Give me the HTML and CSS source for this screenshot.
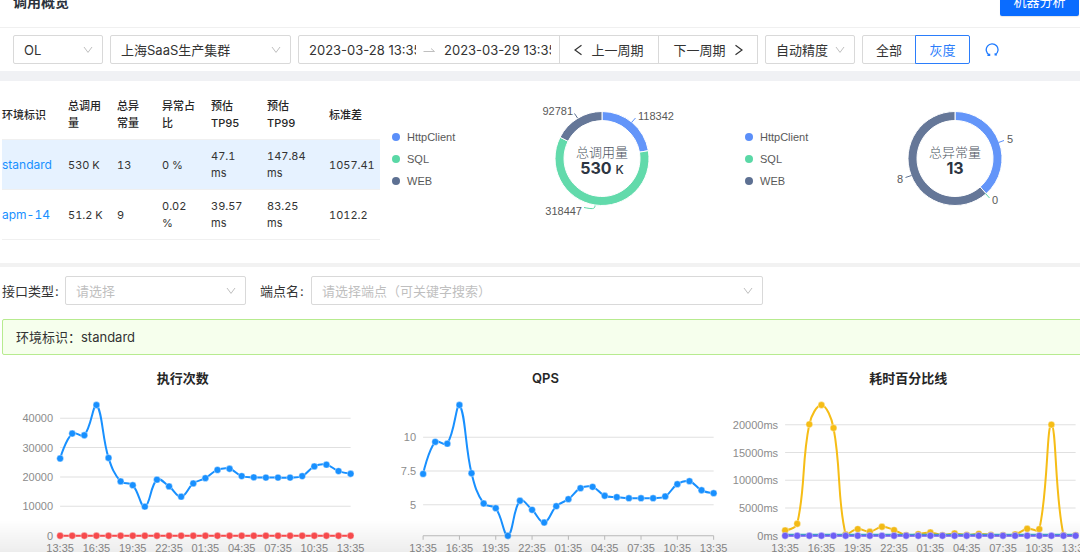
FILE: index.html
```html
<!DOCTYPE html>
<html lang="zh-CN">
<head>
<meta charset="utf-8">
<title>调用概览</title>
<link rel="stylesheet" href="styles.css">
</head>
<body>
<main class="page">
  <header class="header">
    <h1 class="title">调用概览</h1>
    <button class="primary" type="button">机器分析</button>
  </header>

  <div class="toolbar">
    <span class="select select-s">
      <select aria-label="环境"><option>OL</option></select>
      <svg class="chev" viewBox="0 0 10 8"><path d="M1 1l4 5.4L9 1"/></svg>
    </span>
    <span class="select select-m">
      <select aria-label="集群"><option>上海SaaS生产集群</option></select>
      <svg class="chev" viewBox="0 0 10 8"><path d="M1 1l4 5.4L9 1"/></svg>
    </span>
    <div class="group">
      <div class="range">
        <input aria-label="开始时间" value="2023-03-28 13:35:00">
        <svg class="swap" viewBox="0 0 12 6"><path d="M0.5 4.5h11L8 1.5"/></svg>
        <input aria-label="结束时间" value="2023-03-29 13:35:00">
      </div>
      <button class="btn period" type="button"><svg class="arrow" viewBox="0 0 8 12"><path d="M7.5 1.2L1 6l6.500 4.800"/></svg>上一周期</button>
      <button class="btn period" type="button">下一周期<svg class="arrow" viewBox="0 0 8 12"><path d="M0.500 1.200L7 6 0.500 10.800"/></svg></button>
    </div>
    <span class="select select-s">
      <select aria-label="精度"><option>自动精度</option></select>
      <svg class="chev" viewBox="0 0 10 8"><path d="M1 1l4 5.4L9 1"/></svg>
    </span>
    <div class="group">
      <button class="btn mode" type="button">全部</button>
      <button class="btn mode active" type="button">灰度</button>
    </div>
    <button class="reload" type="button" aria-label="刷新">
      <svg viewBox="0 0 14 14"><path d="M4.300 11.900A5.900 5.900 0 1 1 10.300 11.700"/><path d="M2.400 12.300h2.200v-1.600M12 11.900h-1.800v-1.600"/></svg>
    </button>
  </div>

  <section class="overview">
    <table class="stats">
      <colgroup><col class="c1"><col class="c2"><col class="c3"><col class="c4"><col class="c5"><col class="c6"><col class="c7"></colgroup>
      <thead>
        <tr><th>环境标识</th><th>总调用量</th><th>总异常量</th><th>异常占比</th><th>预估 TP95</th><th>预估 TP99</th><th>标准差</th></tr>
      </thead>
      <tbody>
        <tr class="current"><td><a href="#">standard</a></td><td>530 K</td><td>13</td><td>0 %</td><td class="time">47.1 ms</td><td class="time">147.84 ms</td><td>1057.41</td></tr>
        <tr><td><a href="#">apm-14</a></td><td>51.2 K</td><td>9</td><td>0.02 %</td><td class="time">39.57 ms</td><td class="time">83.25 ms</td><td>1012.2</td></tr>
      </tbody>
    </table>

    <div class="pie">
      <ul class="legend"><li class="http">HttpClient</li><li class="sql">SQL</li><li class="web">WEB</li></ul>
      <svg class="donut" viewBox="0 0 180 126" data-values="118342,318447,92781">
        <g class="ring"></g>
        <path class="lead blue" d="M119.500 26.500l4-4.500"/>
        <path class="lead navy" d="M65.500 22l-3-4.500"/>
        <path class="lead green" d="M83 109.500c0 4-3 3.500-11 2"/>
        <text class="tag" x="126" y="24">118342</text>
        <text class="tag end" x="61" y="19">92781</text>
        <text class="tag end" x="70" y="119">318447</text>
        <text class="name" x="90" y="61">总调用量</text>
        <text class="total" x="90" y="78">530 <tspan class="unit">K</tspan></text>
      </svg>
    </div>

    <div class="pie">
      <ul class="legend"><li class="http">HttpClient</li><li class="sql">SQL</li><li class="web">WEB</li></ul>
      <svg class="donut" viewBox="0 0 180 126" data-values="5,0,8">
        <g class="ring"></g>
        <path class="lead blue" d="M133.500 46.500l5.500-2"/>
        <path class="lead navy" d="M46.500 79.500l-6 2"/>
        <path class="lead green" d="M120.500 97.500l4 4.500"/>
        <text class="tag" x="142" y="47">5</text>
        <text class="tag" x="127" y="108">0</text>
        <text class="tag end" x="38" y="87">8</text>
        <text class="name" x="90" y="61">总异常量</text>
        <text class="total" x="90" y="78">13</text>
      </svg>
    </div>
  </section>

  <div class="filters">
    <label for="kind">接口类型<span class="colon">:</span></label>
    <span class="select select-m hint">
      <select id="kind"><option>请选择</option></select>
      <svg class="chev" viewBox="0 0 10 8"><path d="M1 1l4 5.4L9 1"/></svg>
    </span>
    <label class="second" for="endpoint">端点名<span class="colon">:</span></label>
    <span class="select select-l hint">
      <select id="endpoint"><option>请选择端点（可关键字搜索）</option></select>
      <svg class="chev" viewBox="0 0 10 8"><path d="M1 1l4 5.4L9 1"/></svg>
    </span>
  </div>

  <div class="banner">环境标识：standard</div>

  <section class="charts">
    <article><h2>执行次数</h2><svg class="plot" id="count" viewBox="0 0 362 170"></svg></article>
    <article><h2>QPS</h2><svg class="plot" id="qps" viewBox="0 0 362 170"></svg></article>
    <article><h2>耗时百分比线</h2><svg class="plot" id="latency" viewBox="0 0 362 170"></svg></article>
  </section>
</main>
<div class="fade"></div>
<script src="charts.js"></script>
</body>
</html>
```
FILE: styles.css
```css
* { box-sizing: border-box; }

body {
  margin: 0;
  height: 100vh;
  overflow: hidden;
  background: #fff;
  color: #333;
  font: 13px/20px Inter, "Noto Sans CJK SC", sans-serif;
}

button, input, select { font: inherit; color: inherit; }
button { cursor: pointer; }

/* the content is wider than the window, which cuts its right edge */
.page { width: calc(100% + 8px); margin-top: -24px; }

.header {
  display: flex;
  justify-content: space-between;
  align-items: flex-start;
  height: 52px;
  padding: 8px 9px 0 13px;
  border-bottom: 1px solid #f0f0f0;
}
.title { margin: 8px 0 0; font-size: 14px; line-height: 20px; font-weight: 600; color: #2b323b; }
.primary {
  width: 79px;
  height: 32px;
  padding: 2px 0 0;
  border: 0;
  border-radius: 2px;
  background: #0a6cff;
  color: #fff;
  box-shadow: 0 1px 1px #0000001a;
}

.toolbar {
  display: flex;
  align-items: center;
  gap: 7px;
  padding: 7px 13px 7px;
  border-bottom: 10px solid #f0f1f4;
}

.select { position: relative; display: block; height: 29px; }
.select select {
  appearance: none;
  width: 100%;
  height: 100%;
  padding: 0 24px 0 10px;
  border: 1px solid #d9d9d9;
  border-radius: 2px;
  background: #fff;
}
.hint select { color: #bfbfbf; }
.select-s { width: 90px; }
.select-m { width: 181px; }
.select-l { width: 452px; }
.chev {
  position: absolute;
  right: 10px;
  top: 11px;
  width: 10px;
  height: 8px;
  fill: none;
  stroke: #bfbfbf;
  pointer-events: none;
}

.group { display: flex; }
.range {
  display: flex;
  align-items: center;
  width: 262px;
  height: 29px;
  padding-left: 10px;
  border: 1px solid #d9d9d9;
  border-radius: 2px 0 0 2px;
}
.range input { width: 107px; padding: 0; border: 0; background: none; }
.swap { width: 12px; height: 6px; margin: 0 9px 0 7px; fill: none; stroke: #bfbfbf; }
.btn {
  display: flex;
  align-items: center;
  justify-content: center;
  gap: 9px;
  height: 29px;
  margin-left: -1px;
  padding: 0;
  border: 1px solid #d9d9d9;
  background: #fff;
}
.period { width: 100px; }
.mode { width: 54px; }
.mode:first-child { margin-left: 0; border-radius: 2px 0 0 2px; }
.mode.active { width: 55px; border: 1px solid #2b7dfb; border-radius: 0 2px 2px 0; color: #2b7dfb; }
.arrow { width: 8px; height: 12px; fill: none; stroke: #333; stroke-width: 1.2; }
.reload { width: 28px; height: 28px; padding: 7px; margin-left: 1px; border: 0; background: none; }
.reload svg { display: block; width: 14px; height: 14px; fill: none; stroke: #1f7bff; stroke-width: 1.3; }

.overview {
  display: flex;
  align-items: flex-start;
  height: 186px;
  padding: 9px 2px 0 2px;
  border-bottom: 4px solid #f2f2f2;
}

.stats {
  flex: none;
  width: 378px;
  table-layout: fixed;
  border-collapse: collapse;
  font-size: 11px;
  line-height: 17px;
  font-variant-numeric: tabular-nums;
}
.c1 { width: 66px; }
.c2, .c4 { width: 49px; }
.c3 { width: 45px; }
.c5 { width: 56px; }
.c6 { width: 62px; }
.c7 { width: 51px; }
.stats th, .stats td {
  padding: 8px 13px 7px 0;
  border-bottom: 1px solid #f0f0f0;
  text-align: left;
  vertical-align: middle;
}
.stats th:first-child, .stats td:first-child,
.stats th:last-child, .stats td:last-child { padding-right: 0; }
.stats .time { padding-right: 18px; }
.stats th { font-weight: 500; color: #262626; }
.stats a { color: #1890ff; font-size: 12px; text-decoration: none; }
.current { background: #e6f2ff; }

.pie { flex: 1; display: flex; align-items: center; gap: 14px; padding: 6px 0 0 12px; }
.legend {
  flex: none;
  width: 65px;
  margin: 0;
  padding: 0;
  list-style: none;
  font: 11px/22px "Liberation Sans", Arial, sans-serif;
  color: #595959;
}
.legend li { display: flex; align-items: center; gap: 7px; }
.legend li::before { content: ""; width: 8px; height: 8px; border-radius: 50%; background: currentColor; }
.http::before { color: #5b8ff9; }
.sql::before { color: #5ad8a6; }
.web::before { color: #5d7092; }
.donut { display: block; width: 180px; height: 126px; margin: 0 auto; }
.ring path { stroke: #fff; stroke-width: 1; }
.lead { fill: none; stroke-width: 1; }
.blue { stroke: #5b8ff9; }
.navy { stroke: #5d7092; }
.green { stroke: #5ad8a6; }
.tag { font: 11px "Liberation Sans", Arial, sans-serif; fill: #595959; }
.end { text-anchor: end; }
.name { font-size: 13px; font-weight: 300; fill: #4b535e; text-anchor: middle; }
.total { font-size: 16px; font-weight: 700; fill: #2c3542; text-anchor: middle; }
.unit { font-size: 12px; font-weight: 500; }

.filters { display: flex; align-items: center; padding: 9px 2px 14px; }
.filters label { width: 63px; }
.filters label.second { width: 51px; margin-left: 14px; }
.colon { margin-left: 1px; }

.banner {
  margin-left: 2px;
  padding: 7px 13px;
  border: 1px solid #b7eb8f;
  border-radius: 2px;
  background: #f6ffed;
}

.charts { display: grid; grid-template-columns: repeat(3, 1fr); padding-top: 13px; }
.charts h2 { margin: 0 0 6px 3px; font-size: 13px; line-height: 21px; font-weight: 600; text-align: center; color: #262626; }
.plot { display: block; width: 100%; overflow: visible; font: 11px "Liberation Sans", Arial, sans-serif; fill: #8c8c8c; }
.grid { stroke: #e0e0e0; stroke-width: 1; }
.axis { stroke: #bfbfbf; stroke-width: 1; }
.line { fill: none; stroke-width: 2; }
.dot { stroke: #fff; stroke-width: 0.4; }
.label { text-anchor: middle; }

.fade {
  position: fixed;
  left: 0;
  right: 0;
  bottom: 0;
  height: 32px;
  background: linear-gradient(#0000, #00000012);
  pointer-events: none;
}
```
FILE: charts.js
```js
const NS = "http://www.w3.org/2000/svg";

function add(parent, tag, attrs, text) {
  const el = document.createElementNS(NS, tag);
  for (const key in attrs) el.setAttribute(key, attrs[key]);
  if (text) el.textContent = text;
  parent.appendChild(el);
}

/* Donuts */
const COLORS = ["#5b8ff9", "#5ad8a6", "#5d7092"];
document.querySelectorAll(".donut").forEach(svg => {
  const values = svg.dataset.values.split(",").map(Number);
  const sum = values.reduce((a, b) => a + b);
  const at = (r, t) => `${90 + r * Math.sin(t)} ${62.5 - r * Math.cos(t)}`;
  let from = 0;
  values.forEach((value, i) => {
    if (!value) return;
    const to = from + value / sum * Math.PI * 2;
    const big = to - from > Math.PI ? 1 : 0;
    add(svg.querySelector(".ring"), "path", {
      fill: COLORS[i],
      "fill-opacity": 0.95,
      d: `M${at(47, from)}A47 47 0 ${big} 1 ${at(47, to)}L${at(38, to)}A38 38 0 ${big} 0 ${at(38, from)}Z`
    });
    from = to;
  });
});

/* Line charts */
const LEFT = 60, RIGHT = 350, TOP = 10, BOTTOM = 140.5;
const TIMES = ["13:35", "16:35", "19:35", "22:35", "01:35", "04:35", "07:35", "10:35", "13:35"];

function smooth(points) {
  const clamp = y => Math.max(TOP, Math.min(BOTTOM, y));
  const handles = points.map((p, i) => {
    const a = points[i - 1], b = points[i + 1];
    if (!a || !b) return [p, p];
    const da = Math.hypot(p[0] - a[0], p[1] - a[1]);
    const db = Math.hypot(p[0] - b[0], p[1] - b[1]);
    const vx = (b[0] - a[0]) * 0.4, vy = (b[1] - a[1]) * 0.4, d = da + db;
    return [
      [p[0] - vx * da / d, clamp(p[1] - vy * da / d)],
      [p[0] + vx * db / d, clamp(p[1] + vy * db / d)]
    ];
  });
  return points.slice(1).reduce(
    (d, p, i) => `${d}C${handles[i][1]} ${handles[i + 1][0]} ${p}`, `M${points[0]}`);
}

function draw(id, min, max, ticks, series, axis) {
  const svg = document.getElementById(id);
  const x = i => LEFT + i * (RIGHT - LEFT) / 24;
  const y = v => BOTTOM - (v - min) / (max - min) * (BOTTOM - TOP);
  ticks.forEach(([v, name]) => {
    add(svg, "line", { class: "grid", x1: LEFT, x2: RIGHT, y1: y(v), y2: y(v) });
    add(svg, "text", { class: "end", x: 53, y: y(v) + 4 }, name);
  });
  if (axis) add(svg, "line", { class: "axis", x1: LEFT, x2: RIGHT, y1: BOTTOM, y2: BOTTOM });
  TIMES.forEach((name, i) => {
    if (axis) add(svg, "line", { class: "axis", x1: x(i * 3), x2: x(i * 3), y1: BOTTOM, y2: BOTTOM + 4 });
    add(svg, "text", { class: "label", x: x(i * 3), y: 157 }, name);
  });
  series.forEach(({ color, data, dots = true }) => {
    const points = data.map((v, i) => [x(i), y(v)]);
    add(svg, "path", { class: "line", stroke: color, d: smooth(points) });
    if (dots) points.forEach(p => add(svg, "circle", { class: "dot", fill: color, cx: p[0], cy: p[1], r: 3.4 }));
  });
}

const flat = v => Array(25).fill(v);

draw("count", 0, 44500,
  [[40000, "40000"], [30000, "30000"], [20000, "20000"], [10000, "10000"], [0, "0"]],
  [
    { color: "#1890ff", data: [26300, 34800, 34200, 44500, 26500, 18500, 17200, 9900, 19100, 16800, 13300, 17800, 19600, 22400, 22800, 20300, 19900, 19800, 19800, 19800, 20300, 23600, 24200, 22000, 21100] },
    { color: "#ff4d4f", data: flat(0) }
  ]);

draw("qps", 2.71, 12.39,
  [[10, "10"], [7.5, "7.5"], [5, "5"]],
  [{ color: "#1890ff", data: [7.29, 9.66, 9.53, 12.39, 7.34, 5.1, 4.75, 2.71, 5.3, 4.63, 3.69, 4.9, 5.42, 6.23, 6.33, 5.67, 5.57, 5.49, 5.49, 5.49, 5.62, 6.53, 6.75, 6.08, 5.86] }],
  true);

draw("latency", 0, 23580,
  [[20000, "20000ms"], [15000, "15000ms"], [10000, "10000ms"], [5000, "5000ms"], [0, "0ms"]],
  [
    { color: "#f6bd16", data: [960, 2160, 20100, 23580, 19440, 240, 1200, 720, 1620, 1020, 120, 300, 600, 120, 420, 150, 350, 150, 120, 250, 1260, 1200, 20040, 120, 120] },
    { color: "#36b3c3", data: flat(180), dots: false },
    { color: "#7262fd", data: flat(0) }
  ]);
```
